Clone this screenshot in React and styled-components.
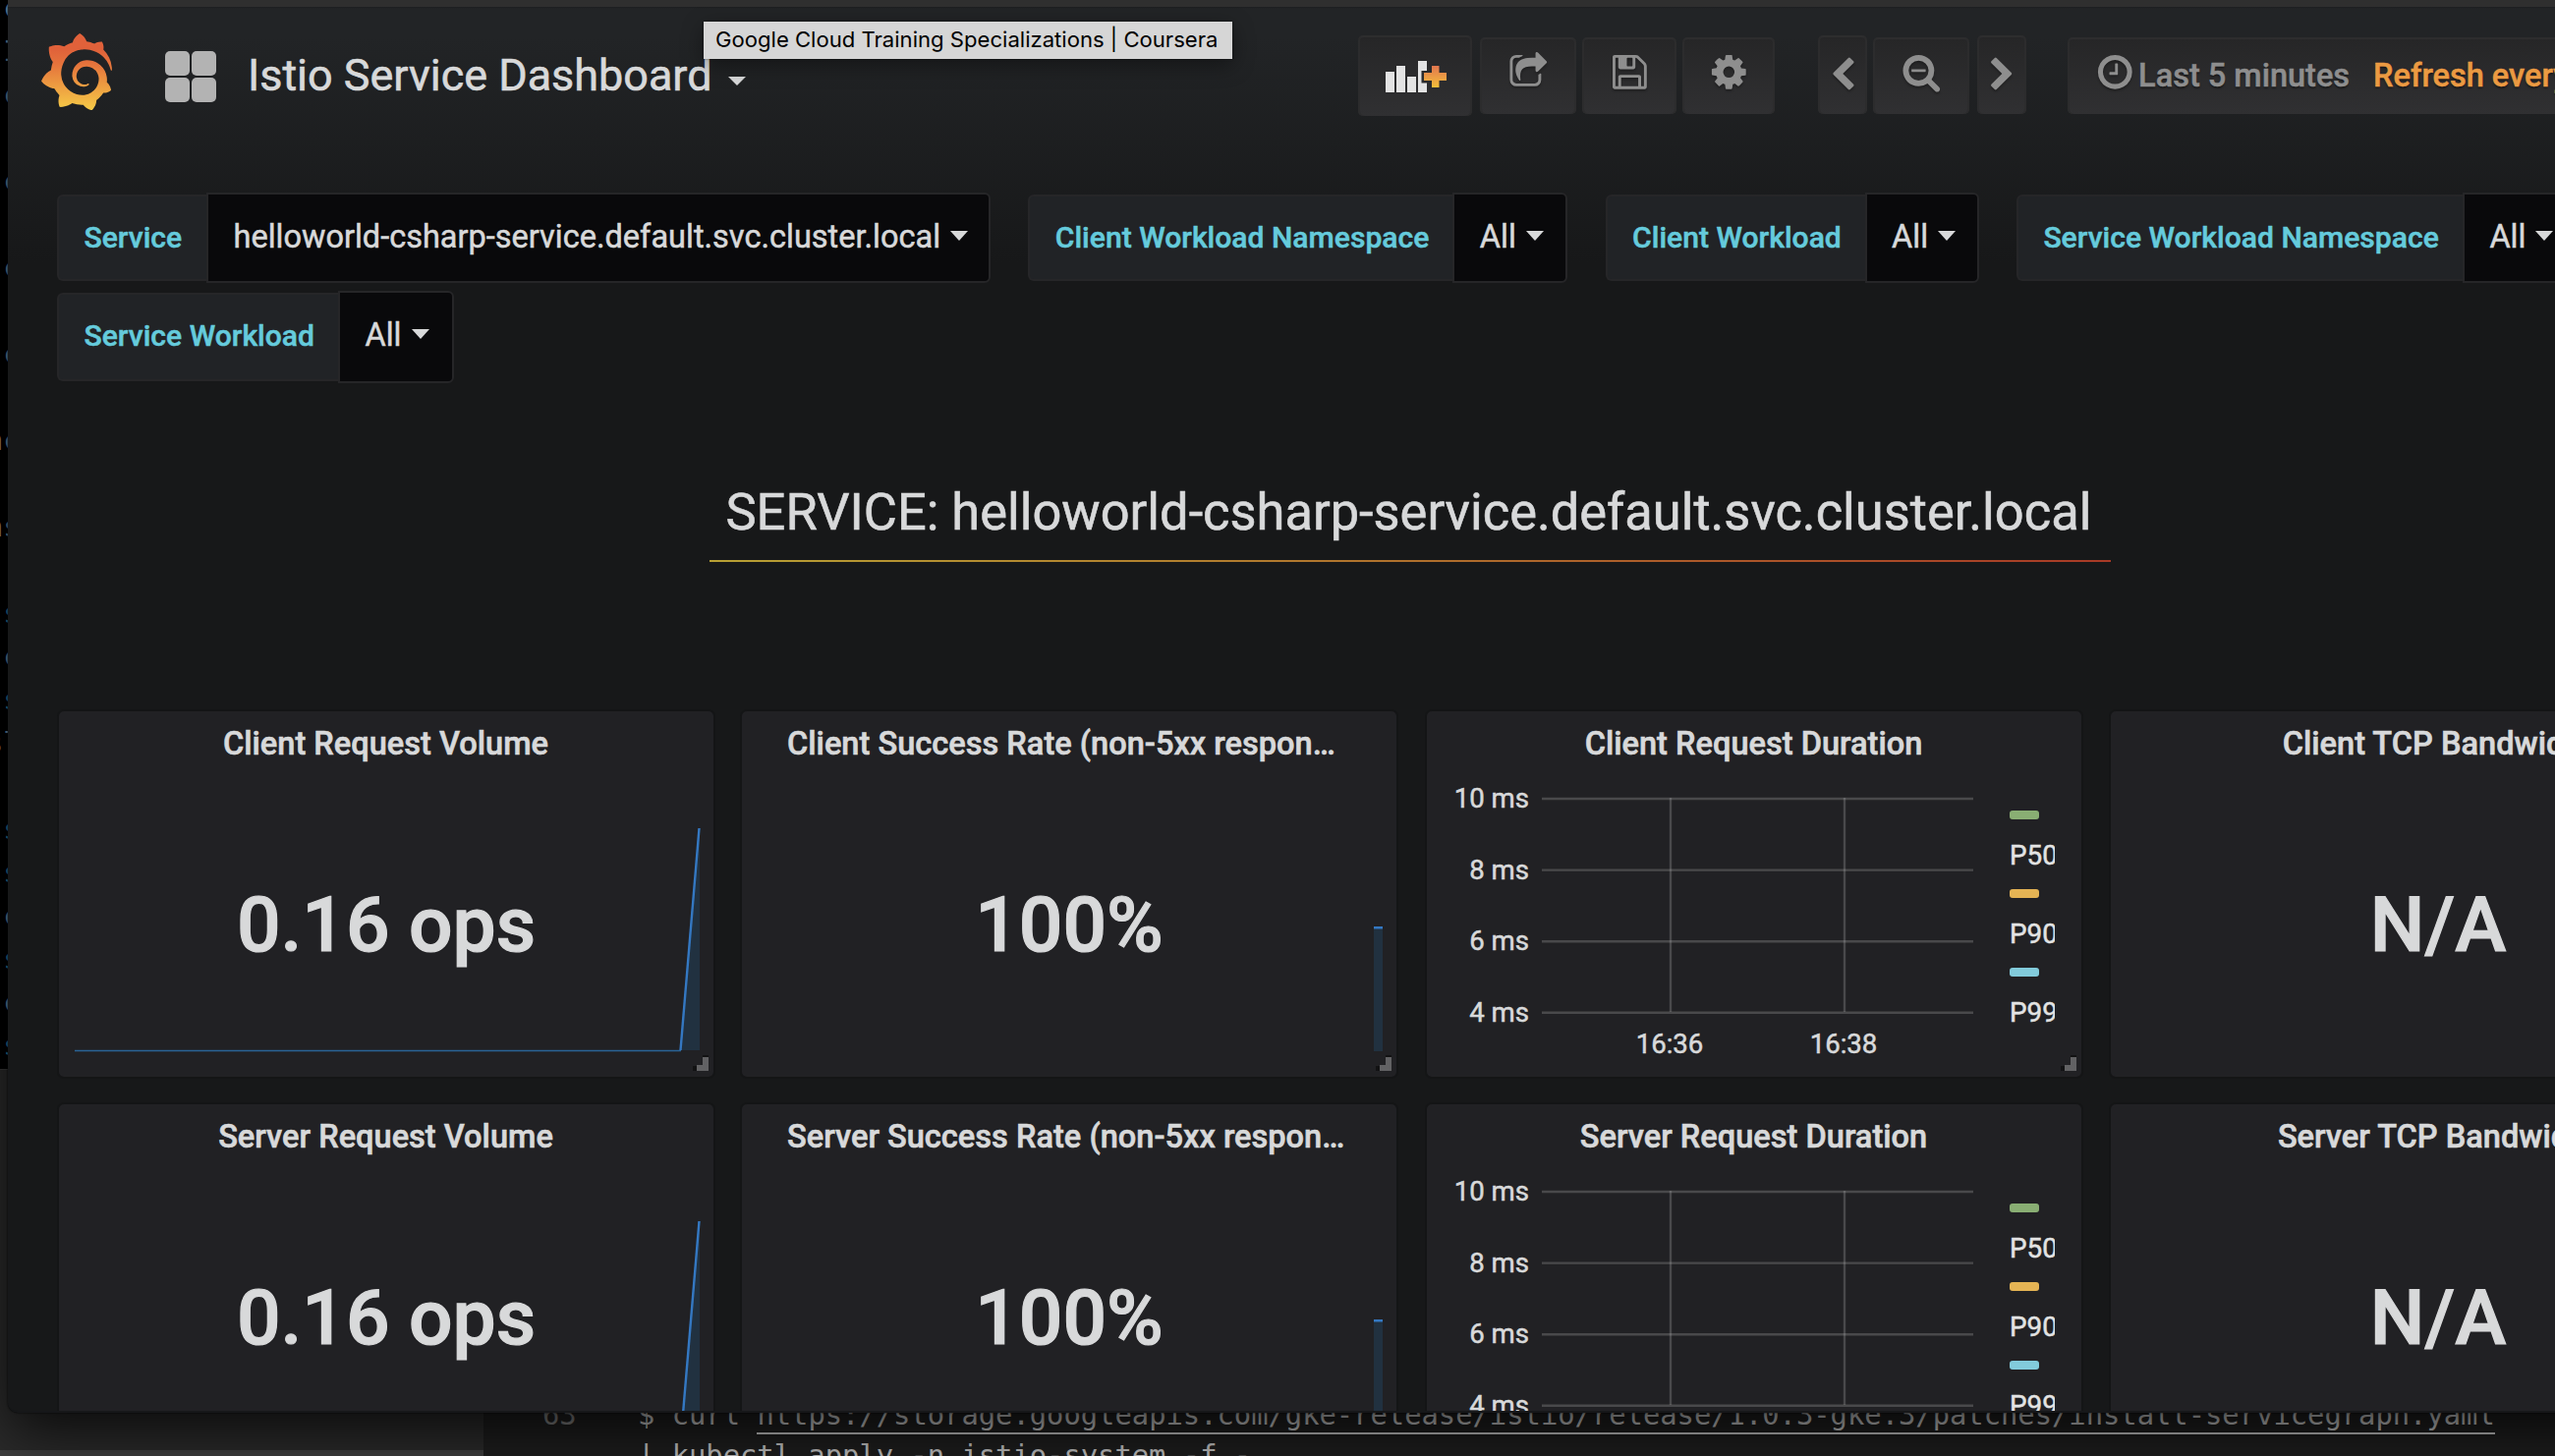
import React from "react";
import styled, { createGlobalStyle, css } from "styled-components";
import { SiGrafana } from "react-icons/si";

const GlobalStyle = createGlobalStyle`
  * { box-sizing: border-box; }
  html, body { margin: 0; padding: 0; background: #000; overflow: hidden; }
  body { font-family: Roboto, "Liberation Sans", sans-serif; color: #d8d9da; }
`;

/* ---------- desktop behind the browser ---------- */

const Desktop = styled.div`
  position: relative;
  width: 2600px;
  height: 1482px;
  overflow: hidden;
  background: #000;
`;

const TerminalSliver = styled.pre`
  position: absolute;
  left: -14px;
  top: -14px;
  width: 60px;
  margin: 0;
  font: 28.8px/44px "DejaVu Sans Mono", monospace;
  color: #7d93a3;
`;

const Ink = styled.span`
  color: ${(p) => p.$color};
`;

const DockPane = styled.div`
  position: absolute;
  left: 0;
  top: 1088px;
  width: 492px;
  height: 394px;
  background: #2b2b2b;
  border-top: 1px solid #3a3a3a;
`;

const DockFooter = styled.div`
  margin-top: 387px;
  height: 6px;
  background: #404040;
`;

const EditorPane = styled.div`
  position: absolute;
  left: 492px;
  top: 1420px;
  width: 2108px;
  height: 62px;
  overflow: hidden;
  background: #1e1e1e;
  font: 28.8px/41px "DejaVu Sans Mono", monospace;
  color: #c4c4c4;
`;

const CodeLine = styled.div`
  display: flex;
  height: 41px;
  white-space: pre;
`;

const LineNumber = styled.span`
  width: 157px;
  padding-left: 60px;
  color: #808080;
`;

const CodeLink = styled.span`
  height: 40px;
  border-bottom: 2px solid #c4c4c4;
`;

/* ---------- browser window ---------- */

const Window = styled.main`
  position: relative;
  margin-left: 8px;
  width: 2700px;
  height: 1438px;
  overflow: hidden;
  border-top: 7px solid #2f2f2f;
  border-bottom: 2px solid #161719;
  border-bottom-left-radius: 10px;
  background: linear-gradient(#1d1e20, #222426 2px, #222426 30px, #171819 260px);
  background-color: #171819;
  box-shadow: 0 20px 60px rgba(0, 0, 0, 0.75), 0 0 2px #000;
`;

const Navbar = styled.header`
  display: flex;
  align-items: center;
  height: 139px;
  padding-left: 31px;
`;

const Logo = styled.div`
  display: flex;
  width: 78px;
  height: 78px;
  margin-top: -7px;
  svg path { fill: url(#sunrise); }
`;

const AppsIcon = styled.div`
  display: grid;
  grid-template-columns: 25px 25px;
  grid-template-rows: 25px 25px;
  gap: 2px;
  margin: 2px 32px 0 51px;
`;

const AppsCell = styled.i`
  border-radius: 5px;
  background: #b3b3b3;
`;

const DashboardPicker = styled.div`
  display: flex;
  align-items: center;
  flex: 0 0 1130px;
  font-size: 44.95px;
  line-height: 60px;
  color: #d8d9da;
  -webkit-text-stroke: 0.6px currentColor;
`;

const Caret = styled.i`
  flex: none;
  width: 0;
  height: 0;
  border-style: solid;
  border-color: #d8d9da transparent transparent;
  border-width: ${(p) => (p.$small ? "9px 9px 0" : "10px 9.5px 0")};
  margin: ${(p) => (p.$small ? "12px 0 0 17px" : "0 0 0 10px")};
`;

const NavButton = styled.button`
  display: flex;
  align-items: center;
  justify-content: center;
  flex: none;
  width: ${(p) => p.$w}px;
  height: ${(p) => p.$h || 78}px;
  margin: ${(p) => p.$lift || 0}px 0 0 ${(p) => p.$gap || 0}px;
  padding: 0 0 0 ${(p) => p.$nudge || 0}px;
  border: 0;
  border-top: 2px solid #2d2d2e;
  border-radius: 5px;
  background: linear-gradient(#262627, #303032);
  box-shadow: inset 2px 0 #2c2c2d, inset -2px 0 #2c2c2d;
  color: #8e8e8e;
  ${(p) =>
    p.$text &&
    css`
      justify-content: flex-start;
      padding-left: 27.5px;
      font: 500 32.5px Roboto, sans-serif;
      -webkit-text-stroke: 0.5px currentColor;
      text-shadow: 0 2px 2px rgba(0, 0, 0, 0.45);
      white-space: pre;
    `}
`;

const Glyph = styled.svg`
  flex: none;
  width: ${(p) => p.$size || 40.6}px;
  height: ${(p) => p.$size || 40.6}px;
  margin-bottom: ${(p) => (p.$up === undefined ? 8 : p.$up)}px;
  fill: currentColor;
  filter: drop-shadow(0 2px 1px rgba(0, 0, 0, 0.3));
`;

const RangeText = styled.span`
  margin: -1px 0 0 4px;
`;

const RefreshText = styled.span`
  margin: -1px 0 0 24px;
  color: #eb9a42;
`;

const Tooltip = styled.div`
  position: absolute;
  left: 708px;
  top: 15px;
  width: 538px;
  height: 38px;
  padding-left: 12px;
  background: #d6d6d6;
  color: #000;
  font: 22.1px/36px Inter, "Liberation Sans", sans-serif;
  white-space: nowrap;
  box-shadow: 0 6px 22px rgba(0, 0, 0, 0.4), 0 0 2px rgba(0, 0, 0, 0.5);
`;

const Filters = styled.section`
  display: flex;
  flex-direction: column;
  gap: 8px;
  padding: 50px 0 0 50px;
`;

const FilterRow = styled.div`
  display: flex;
  gap: 38.3px;
  height: ${(p) => p.$h}px;
`;

const Filter = styled.div`
  display: flex;
  align-items: stretch;
`;

const FilterLabel = styled.label`
  width: ${(p) => p.$w}px;
  margin: 2px 0;
  padding-left: 25.5px;
  border: 2px solid #262628;
  border-right: 0;
  border-radius: 6px 0 0 6px;
  background: #212326;
  color: #65cbdc;
  font-weight: 500;
  font-size: 30.1px;
  line-height: 84px;
  white-space: nowrap;
  -webkit-text-stroke: 0.5px currentColor;
`;

const FilterValue = styled.div`
  display: flex;
  width: ${(p) => p.$w}px;
  padding-left: 25.5px;
  border: 2px solid #262628;
  border-radius: 0 6px 6px 0;
  background: #09090b;
  font-size: 32.5px;
  line-height: 86px;
  white-space: nowrap;
  -webkit-text-stroke: 0.5px currentColor;
  i { margin-top: 37px; }
`;

const ServiceHeading = styled.h1`
  width: 1426px;
  height: 100px;
  margin: 82px 0 150px 714px;
  padding-left: 16.5px;
  font-weight: 400;
  font-size: 52.4px;
  line-height: 98px;
  white-space: nowrap;
  -webkit-text-stroke: 0.6px currentColor;
  background: linear-gradient(90deg, #b8a034, #b0702c 50%, #a83a26) bottom / 100% 2px no-repeat;
`;

const PanelGrid = styled.section`
  display: grid;
  grid-template-columns: 695px 697px 696px 696px;
  grid-auto-rows: 376px;
  row-gap: 24px;
  padding-left: 50px;
`;

const Panel = styled.article`
  position: relative;
  width: 670px;
  border: 2px solid #141516;
  border-radius: 7px;
  background: #212124;
`;

const PanelTitle = styled.h2`
  margin: 0;
  padding: ${(p) => (p.$clipped ? "0 0 0 46px" : "0 1px 0 0")};
  font-weight: 500;
  font-size: 32.6px;
  line-height: 66px;
  text-align: ${(p) => (p.$clipped ? "left" : "center")};
  white-space: nowrap;
  -webkit-text-stroke: 0.6px currentColor;
`;

const StatBody = styled.div`
  position: relative;
  display: flex;
  justify-content: center;
  height: 306px;
  font-weight: 500;
  font-size: 78.5px;
  line-height: 302px;
  -webkit-text-stroke: 1.2px currentColor;
`;

const Sparkline = styled.svg`
  position: absolute;
  left: 0;
  top: 0;
  width: 666px;
  height: 306px;
`;

const GraphBody = styled.div`
  display: flex;
  height: 306px;
`;

const Plot = styled.svg`
  flex: none;
  width: 592px;
  height: 306px;
  line { stroke: rgba(200, 200, 200, 0.24); stroke-width: 2.4; }
  text {
    fill: #d8d9da;
    stroke: #d8d9da;
    stroke-width: 0.5px;
    font: 27.6px Roboto, sans-serif;
  }
`;

const Legend = styled.div`
  width: 47px;
  padding-top: 35px;
  overflow: hidden;
`;

const LegendItem = styled.div`
  height: 80px;
  padding-left: 1px;
  font-size: 27.8px;
  line-height: 36px;
  color: #e3e3e3;
  -webkit-text-stroke: 0.5px currentColor;
  &::before {
    content: "";
    display: block;
    width: 30px;
    height: 9px;
    margin: 0 0 19px 0;
    border-radius: 3px;
    background: ${(p) => p.$color};
  }
`;

const ResizeHandle = styled.svg`
  position: absolute;
  right: 5.5px;
  bottom: 6px;
  width: 17px;
  height: 17px;
`;

/* ---------- data ---------- */

const icons = {
  share:
    "M1472 989v259q0 119-84.5 203.500t-203.500 84.500h-832q-119 0-203.500-84.500t-84.500-203.500v-832q0-119 84.500-203.500t203.500-84.500h255q13 0 22.500 9.500t9.500 22.500q0 27-26 32-77 26-133 60-10 4-16 4h-112q-66 0-113 47t-47 113v832q0 66 47 113t113 47h832q66 0 113-47t47-113v-214q0-19 18-29 28-13 54-37 16-16 35-8 21 9 21 29zm237-496l-384 384q-18 19-45 19-12 0-25-5-39-17-39-59v-192h-160q-323 0-438 131-119 137-74 473 3 23-20 34-8 2-12 2-16 0-26-13-10-14-21-31t-39.500-68.500-49.500-99.500-38.500-114-17.500-122q0-49 3.500-91t14-90 28-88 47-81.500 68.500-74 94.500-61.500 124.500-48.500 159.500-30.500 196.500-11h160v-192q0-42 39-59 13-5 25-5 26 0 45 19l384 384q19 19 19 45t-19 45z",
  save:
    "M384 1536h768v-384h-768v384zm896 0h128v-896q0-14-10-38.500t-20-34.500l-281-281q-10-10-34-20t-39-10v416q0 40-28 68t-68 28h-576q-40 0-68-28t-28-68v-416h-128v1280h128v-416q0-40 28-68t68-28h832q40 0 68 28t28 68v416zm-384-928v-320q0-13-9.500-22.500t-22.500-9.500h-192q-13 0-22.500 9.500t-9.500 22.500v320q0 13 9.500 22.500t22.500 9.500h192q13 0 22.500-9.500t9.500-22.500zm640 32v928q0 40-28 68t-68 28h-1344q-40 0-68-28t-28-68v-1344q0-40 28-68t68-28h928q40 0 88 20t76 48l280 280q28 28 48 76t20 88z",
  cog:
    "M1152 896q0-106-75-181t-181-75-181 75-75 181 75 181 181 75 181-75 75-181zm512-109v222q0 12-8 23t-20 13l-185 28q-19 54-39 91 35 50 107 138 10 12 10 25t-9 23q-27 37-99 108t-94 71q-12 0-26-9l-138-108q-44 23-91 38-16 136-29 186-7 28-36 28h-222q-14 0-24.500-8.500t-11.500-21.500l-28-184q-49-16-90-37l-141 107q-10 9-25 9-14 0-25-11-126-114-165-168-7-10-7-23 0-12 8-23 15-21 51-66.500t54-70.500q-27-50-41-99l-183-27q-13-2-21-12.500t-8-23.500v-222q0-12 8-23t19-13l186-28q14-46 39-92-40-57-107-138-10-12-10-24 0-10 9-23 26-36 98.500-107.500t94.500-71.500q13 0 26 10l138 107q44-23 91-38 16-136 29-186 7-28 36-28h222q14 0 24.500 8.500t11.500 21.500l28 184q49 16 90 37l142-107q9-9 24-9 13 0 25 10 129 119 165 170 7 8 7 22 0 12-8 23-15 21-51 66.500t-54 70.500q26 50 41 98l183 28q13 2 21 12.500t8 23.500z",
  left:
    "M1427 301l-531 531 531 531q19 19 19 45t-19 45l-166 166q-19 19-45 19t-45-19l-742-742q-19-19-19-45t19-45l742-742q19-19 45-19t45 19l166 166q19 19 19 45t-19 45z",
  right:
    "M1363 877l-742 742q-19 19-45 19t-45-19l-166-166q-19-19-19-45t19-45l531-531-531-531q-19-19-19-45t19-45l166-166q19-19 45-19t45 19l742 742q19 19 19 45t-19 45z",
  zoomOut:
    "M1088 800v64q0 13-9.500 22.500t-22.500 9.500h-576q-13 0-22.500-9.500t-9.500-22.500v-64q0-13 9.500-22.500t22.500-9.500h576q13 0 22.500 9.500t9.500 22.500zm128 32q0-185-131.500-316.500t-316.500-131.500-316.500 131.500-131.500 316.500 131.500 316.500 316.500 131.500 316.500-131.500 131.500-316.500zm512 832q0 53-37.500 90.500t-90.500 37.500q-54 0-90-38l-343-342q-179 124-399 124-143 0-273.500-55.500t-225-150-150-225-55.500-273.500 55.500-273.500 150-225 225-150 273.500-55.500 273.500 55.500 225 150 150 225 55.500 273.500q0 220-124 399l343 343q37 37 37 90z",
  clock:
    "M1024 544v448q0 14-9 23t-23 9h-320q-14 0-23-9t-9-23v-64q0-14 9-23t23-9h224v-352q0-14 9-23t23-9h64q14 0 23 9t9 23zm416 352q0-148-73-273t-198-198-273-73-273 73-198 198-73 273 73 273 198 198 273 73 273-73 198-198 73-273zm224 0q0 209-103 385.500t-279.500 279.500-385.500 103-385.500-103-279.500-279.500-103-385.500 103-385.500 279.500-279.500 385.500-103 385.500 103 279.500 279.500 103 385.500z",
};

const filterRows = [
  {
    h: 92,
    filters: [
      ["Service", 152, "helloworld-csharp-service.default.svc.cluster.local", 798],
      ["Client Workload Namespace", 432, "All", 117],
      ["Client Workload", 264, "All", 116],
      ["Service Workload Namespace", 454, "All", 116],
    ],
  },
  { h: 94, filters: [["Service Workload", 286, "All", 118]] },
];

const blue = "#6f93ad";
const teal = "#2f86a8";
const terminal = [
  [" ", "c"], [" ", "I"], [" ", "c"], [" ", " "], [" ", "c"], [" ", " "], [" ", "c"], [" ", " "],
  [" ", "c"], [" ", " "], ["n", "c"], [" ", " "], ["n", "s"], [" ", " "], [".", "s", teal],
  [" ", "c"], [".", "s", teal], ["s", "l"], [" ", " "], [".", "s", teal], [".", "s", teal],
  [" ", "c"], [".", "s", teal], [" ", "c"], [".", "s", teal],
];

/* ---------- parts ---------- */

const Icon = ({ name, size, up }) => (
  <Glyph viewBox="0 0 1792 1792" $size={size} $up={up}>
    <path d={icons[name]} />
  </Glyph>
);

const AddPanelIcon = () => (
  <svg width="64" height="36" viewBox="0 0 64 36">
    <defs>
      <linearGradient id="plus" x1="0" y1="0" x2="0" y2="1">
        <stop offset="0" stopColor="#e2764f" />
        <stop offset="1" stopColor="#f4bf3a" />
      </linearGradient>
    </defs>
    <g fill="#e3e3e3">
      <rect x="1" y="13" width="9" height="21" />
      <rect x="12" y="7" width="9" height="27" />
      <rect x="23" y="18" width="9" height="16" />
      <path d="M34 2h9v10h-5.500v12.500h5.500V34h-9z" />
    </g>
    <path d="M48 7h7.500v7h7.500v8h-7.500v7h-7.500v-7h-8v-8h8z" fill="url(#plus)" />
  </svg>
);

const Handle = () => (
  <ResizeHandle viewBox="0 0 17 17">
    <path d="M1 12h4v5H1zM11 1h6v2h-6z" fill="#121213" />
    <path d="M11 3h6v14H5v-6h6z" fill="#626264" />
  </ResizeHandle>
);

const Stat = ({ title, value, spark, clipped }) => (
  <Panel>
    <PanelTitle $clipped={clipped}>{title}</PanelTitle>
    <StatBody>
      {value}
      {spark === "rise" && (
        <Sparkline viewBox="0 0 666 306">
          <path d="M633 279L652 53V279z" fill="#1f78c1" fillOpacity="0.18" />
          <path d="M16 279.500H633" stroke="#2a6496" strokeWidth="1.6" fill="none" />
          <path d="M632.500 279L651.500 53" stroke="#3478c2" strokeWidth="2.4" fill="none" />
        </Sparkline>
      )}
      {spark === "step" && (
        <Sparkline viewBox="0 0 666 306">
          <path d="M643 153h9v127h-9z" fill="#1f78c1" fillOpacity="0.18" />
          <path d="M643 153h9v2.500h-9z" fill="#3478c2" />
        </Sparkline>
      )}
    </StatBody>
    <Handle />
  </Panel>
);

const Duration = ({ title }) => (
  <Panel>
    <PanelTitle>{title}</PanelTitle>
    <GraphBody>
      <Plot viewBox="0 0 592 306">
        {["10 ms", "8 ms", "6 ms", "4 ms"].map((tick, i) => {
          const y = 23 + i * 72.6;
          return (
            <g key={tick}>
              <line x1="117" x2="556" y1={y} y2={y} />
              <text x="104" y={y + 9} textAnchor="end">{tick}</text>
            </g>
          );
        })}
        {[["16:36", 248], ["16:38", 425]].map(([tick, x]) => (
          <g key={tick}>
            <line x1={x} x2={x} y1="22" y2="240" />
            <text x={x - 1} y="282" textAnchor="middle">{tick}</text>
          </g>
        ))}
      </Plot>
      <Legend>
        <LegendItem $color="#89ae73">P50</LegendItem>
        <LegendItem $color="#e5b454">P90</LegendItem>
        <LegendItem $color="#82cbdb">P99</LegendItem>
      </Legend>
    </GraphBody>
    <Handle />
  </Panel>
);

export default function App() {
  return (
    <Desktop>
      <GlobalStyle />
      <TerminalSliver>
        {terminal.map(([a, b, color], i) => (
          <React.Fragment key={i}>
            <Ink $color={color ? "#7a6a20" : "#a08a76"}>{a}</Ink>
            <Ink $color={color || blue}>{b}</Ink>
            {"\n"}
          </React.Fragment>
        ))}
      </TerminalSliver>
      <DockPane>
        <DockFooter />
      </DockPane>
      <EditorPane>
        <CodeLine>
          <LineNumber>63</LineNumber>
          <span>$ curl </span>
          <CodeLink>
            https://storage.googleapis.com/gke-release/istio/release/1.0.3-gke.3/patches/install-servicegraph.yaml
          </CodeLink>
        </CodeLine>
        <CodeLine>
          <LineNumber />
          <span>| kubectl apply -n istio-system -f -</span>
        </CodeLine>
      </EditorPane>

      <Window>
        <Navbar>
          <Logo>
            <svg width="0" height="0">
              <linearGradient id="sunrise" x1="0" y1="0" x2="0" y2="1">
                <stop offset="0.2" stopColor="#e0613a" />
                <stop offset="0.4" stopColor="#e5733c" />
                <stop offset="1" stopColor="#f6cb47" />
              </linearGradient>
            </svg>
            <SiGrafana size={78} />
          </Logo>
          <AppsIcon>
            <AppsCell />
            <AppsCell />
            <AppsCell />
            <AppsCell />
          </AppsIcon>
          <DashboardPicker>
            Istio Service Dashboard
            <Caret $small />
          </DashboardPicker>
          <NavButton $w={116} $h={82} $nudge={2}><AddPanelIcon /></NavButton>
          <NavButton $w={98} $gap={8}><Icon name="share" /></NavButton>
          <NavButton $w={96} $gap={6} $nudge={6}><Icon name="save" /></NavButton>
          <NavButton $w={94} $gap={6} $nudge={1}><Icon name="cog" /></NavButton>
          <NavButton $w={50} $gap={44} $h={80} $lift={-2}><Icon name="left" size={36.6} up={0} /></NavButton>
          <NavButton $w={98} $gap={6}><Icon name="zoomOut" /></NavButton>
          <NavButton $w={50} $gap={8} $h={80} $lift={-2}><Icon name="right" size={36.6} up={0} /></NavButton>
          <NavButton $w={560} $gap={42} $text>
            <Icon name="clock" />
            <RangeText>Last 5 minutes</RangeText>
            <RefreshText>Refresh every 5s</RefreshText>
          </NavButton>
        </Navbar>

        <Filters>
          {filterRows.map((row) => (
            <FilterRow key={row.h} $h={row.h}>
              {row.filters.map(([label, lw, value, vw]) => (
                <Filter key={label}>
                  <FilterLabel $w={lw}>{label}</FilterLabel>
                  <FilterValue $w={vw}>
                    {value}
                    <Caret />
                  </FilterValue>
                </Filter>
              ))}
            </FilterRow>
          ))}
        </Filters>

        <ServiceHeading>SERVICE: helloworld-csharp-service.default.svc.cluster.local</ServiceHeading>

        <PanelGrid>
          {["Client", "Server"].map((side) => (
            <React.Fragment key={side}>
              <Stat title={`${side} Request Volume`} value="0.16 ops" spark="rise" />
              <Stat title={`${side} Success Rate (non-5xx respon…`} value="100%" spark="step" clipped />
              <Duration title={`${side} Request Duration`} />
              <Stat title={`${side} TCP Bandwidth`} value="N/A" />
            </React.Fragment>
          ))}
        </PanelGrid>

        <Tooltip>Google Cloud Training Specializations | Coursera</Tooltip>
      </Window>
    </Desktop>
  );
}
